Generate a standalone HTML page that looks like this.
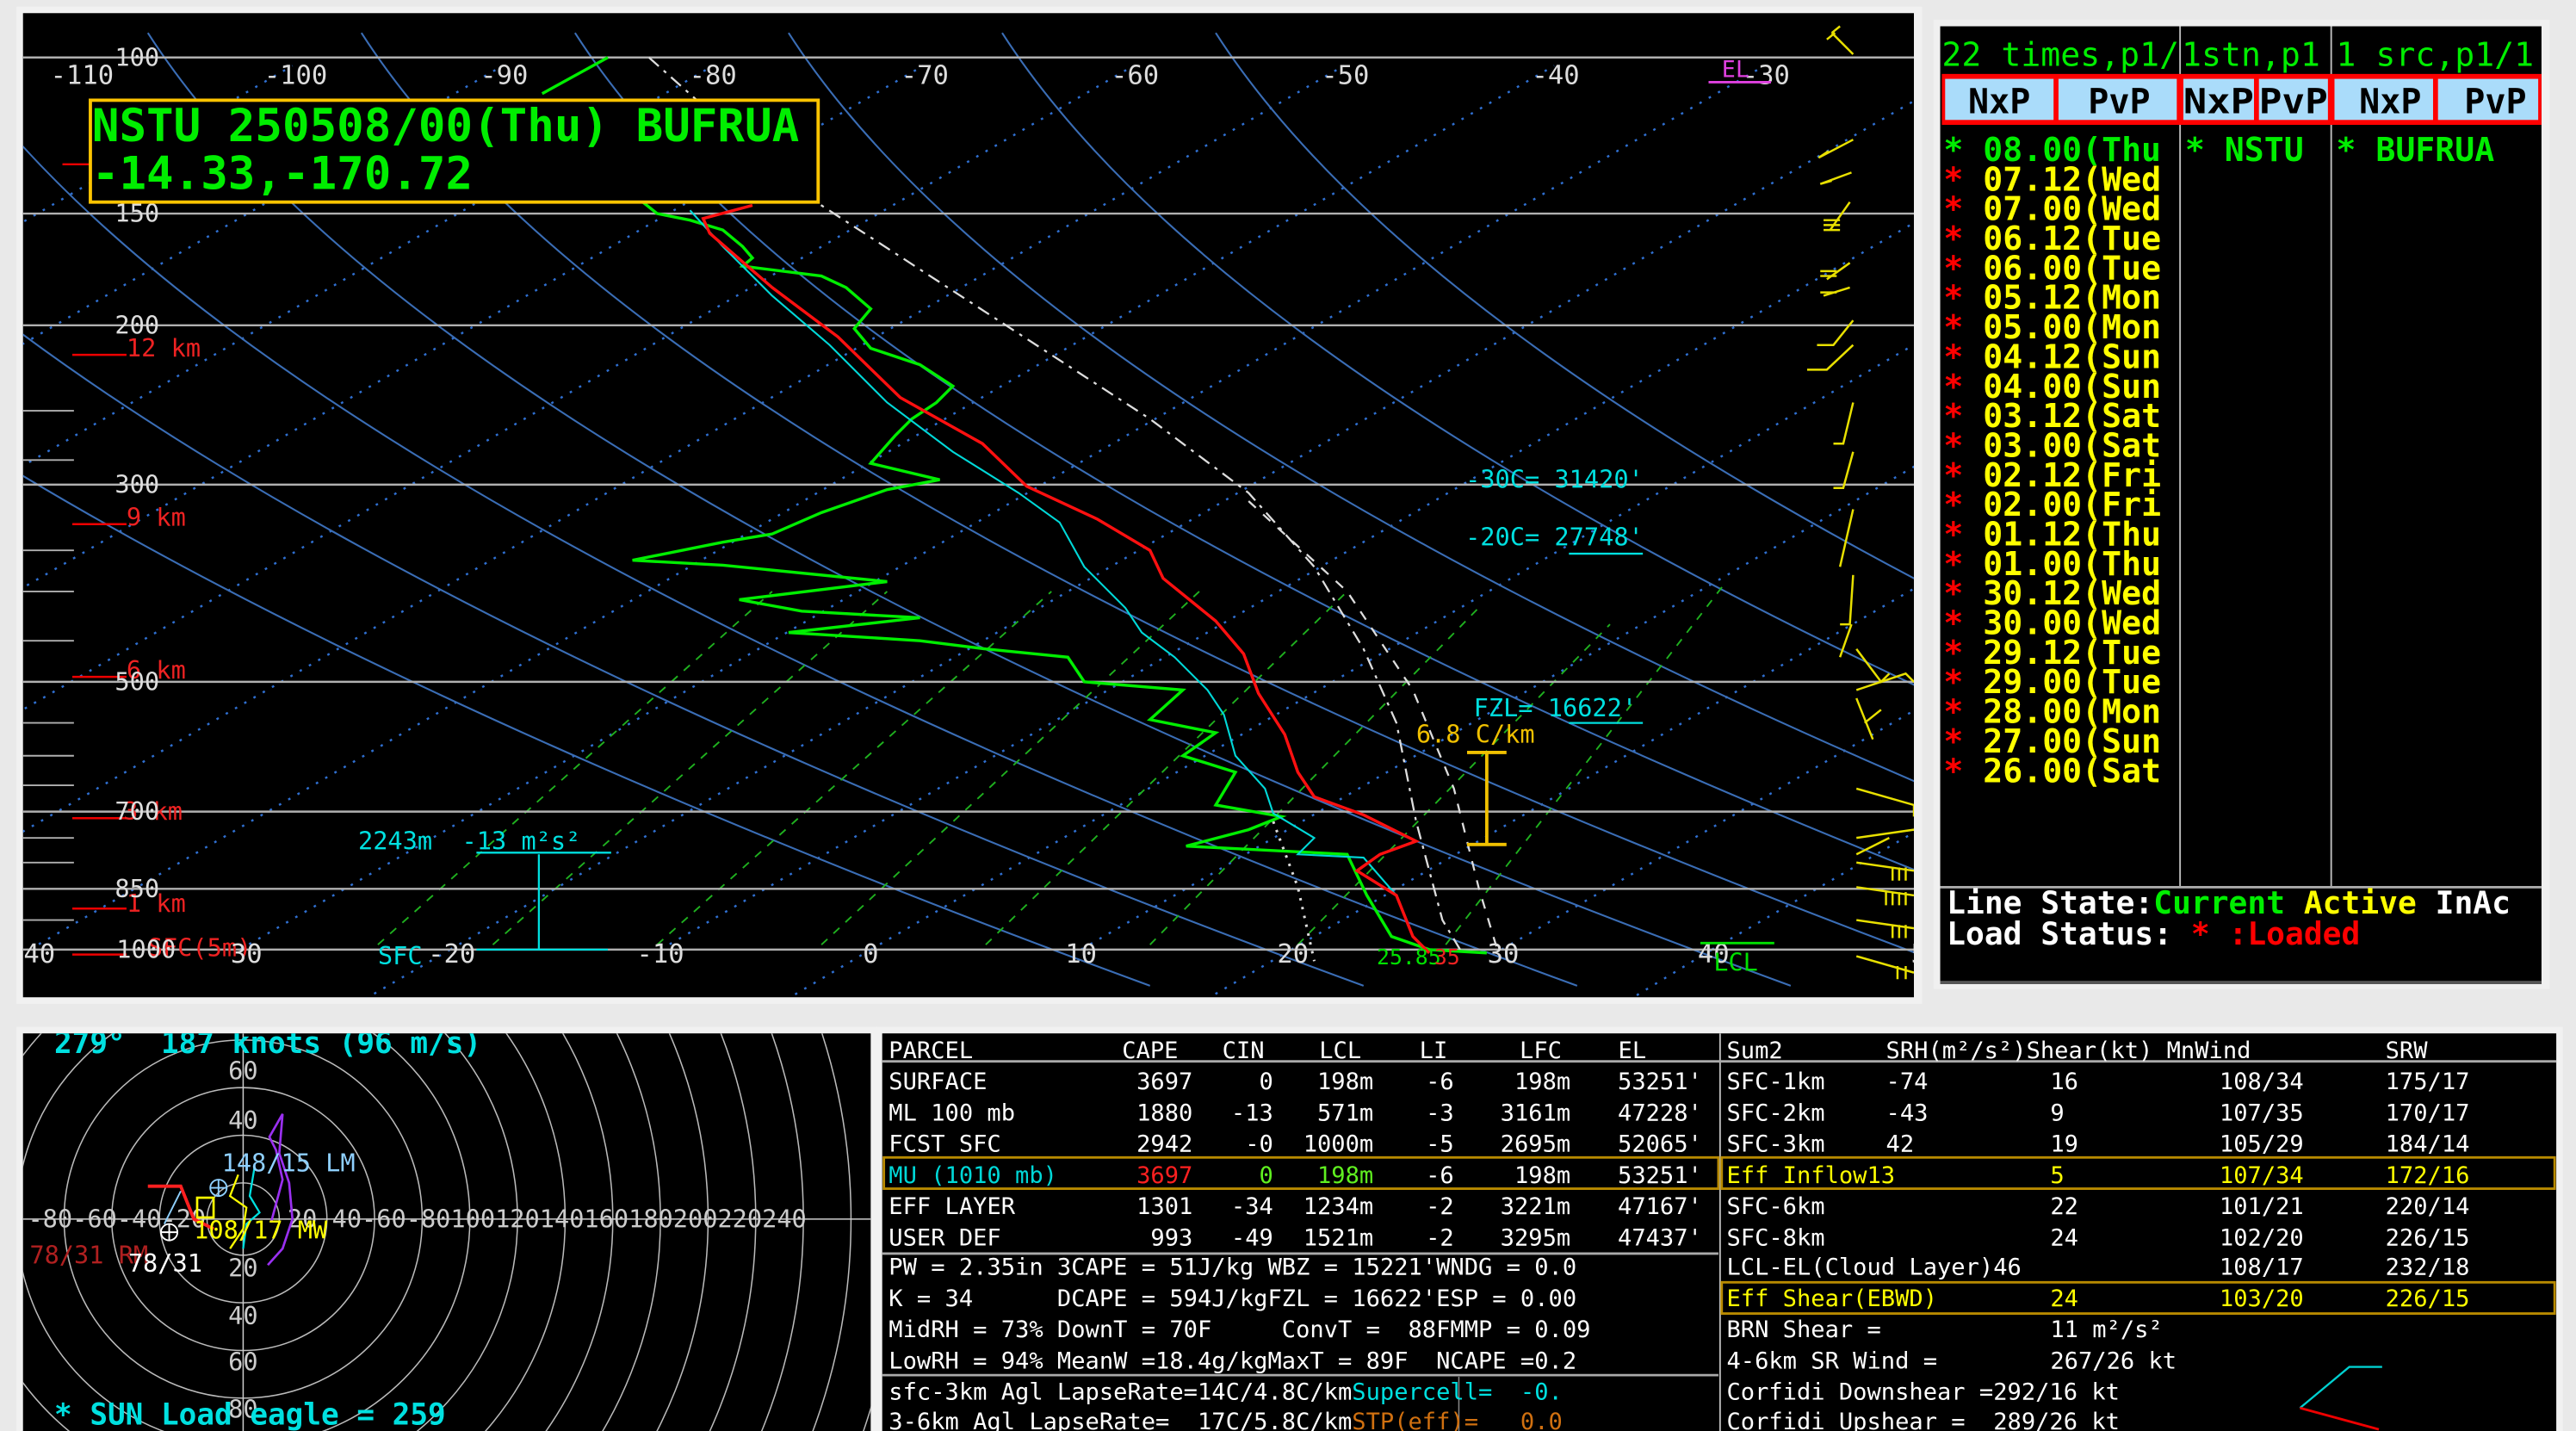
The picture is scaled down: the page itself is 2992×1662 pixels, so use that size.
<!DOCTYPE html>
<html><head><meta charset="utf-8"><style>
html,body{margin:0;padding:0;background:#e9e9e9;width:2992px;height:1662px;overflow:hidden}
svg{display:block}
text{font-family:"DejaVu Sans Mono","Liberation Mono",monospace;white-space:pre}
.t{font-size:14.2px;fill:#fff}
</style></head><body>
<svg width="2992" height="1662" viewBox="0 0 1568 871" xmlns="http://www.w3.org/2000/svg">
<defs>
<clipPath id="cs"><rect x="14" y="8" width="1151" height="599"/></clipPath>
<clipPath id="ch"><rect x="14" y="629" width="516" height="242"/></clipPath>
<clipPath id="ct"><rect x="537" y="629" width="1019" height="242"/></clipPath>
<clipPath id="cl"><rect x="537" y="629" width="509" height="242"/></clipPath>
</defs>
<rect width="1568" height="871" fill="#e9e9e9"/>
<rect x="10" y="4" width="1160" height="607" fill="#f1f1f1"/>
<rect x="14" y="8" width="1151" height="599" fill="#000"/>
<g clip-path="url(#cs)">
 <g stroke="#2f6fd0" stroke-width="1.3" stroke-dasharray="1.5,5" fill="none">
  <path d="M-238 578 L690 40"/><path d="M-110 578 L818 40"/><path d="M18 578 L946 40"/><path d="M146 578 L1074 40"/><path d="M274 578 L1202 40"/><path d="M402 578 L1330 40"/><path d="M530 578 L1458 40"/><path d="M658 578 L1586 40"/><path d="M786 578 L1714 40"/><path d="M914 578 L1842 40"/><path d="M1042 578 L1970 40"/><path d="M-366 578 L562 40"/><path d="M-494 578 L434 40"/><path d="M-622 578 L306 40"/><path d="M-750 578 L178 40"/>
  <path d="M-238 578 L-400 672"/><path d="M274 578 L150 650"/><path d="M530 578 L400 655"/><path d="M786 578 L680 640"/><path d="M1042 578 L940 640"/>
 </g>
 <g stroke="#3a6db5" stroke-width="1.1" fill="none">
  <path d="M-300 20 Q-120 300 700 600"/><path d="M-170 20 Q10 300 830 600"/><path d="M-40 20 Q140 300 960 600"/><path d="M90 20 Q270 300 1090 600"/><path d="M220 20 Q400 300 1220 600"/><path d="M350 20 Q530 300 1350 600"/><path d="M480 20 Q660 300 1480 600"/><path d="M610 20 Q790 300 1610 600"/><path d="M740 20 Q920 300 1740 600"/>
 </g>
 <g stroke="#1fb01f" stroke-width="1" stroke-dasharray="5,5" fill="none">
  <path d="M230 575 L470 360"/><path d="M300 575 L540 360"/><path d="M400 575 L640 360"/><path d="M500 575 L730 360"/><path d="M600 575 L820 360"/><path d="M700 575 L900 370"/><path d="M790 575 L980 380"/><path d="M880 575 L1050 355"/>
 </g>
 <g stroke="#b0b0b0" stroke-width="1.3">
  <path d="M14 35H1165M14 130H1165M14 198H1165M14 295H1165M14 415H1165M14 494H1165M14 541H1165M14 578H1165"/>
  <path d="M14 250H45M14 280H45M14 335H45M14 360H45M14 390H45M14 440H45M14 460H45M14 478H45M14 510H45M14 525H45M14 560H45" stroke-width="1"/>
 </g>
 <g stroke="#e00" stroke-width="1.3"><path d="M44 216H77M44 319H77M44 412H77M44 498H77M44 553H77M44 581H77M38 100H55"/></g>
 <g font-size="15" fill="#e22"><text x="77" y="217">12 km</text><text x="77" y="320">9 km</text><text x="77" y="413">6 km</text><text x="75" y="499">3 km</text><text x="77" y="555">1 km</text><text x="90" y="582">SFC(5m)</text></g>
 <g font-size="15" fill="#ddd" text-anchor="end"><text x="97" y="40">100</text><text x="97" y="135">150</text><text x="97" y="203">200</text><text x="97" y="300">300</text><text x="97" y="420">500</text><text x="97" y="499">700</text><text x="97" y="546">850</text><text x="107" y="583">1000</text></g>
 <g font-size="16" fill="#ddd" text-anchor="middle"><text x="50" y="51">-110</text><text x="180" y="51">-100</text><text x="307" y="51">-90</text><text x="434" y="51">-80</text><text x="563" y="51">-70</text><text x="691" y="51">-60</text><text x="819" y="51">-50</text><text x="947" y="51">-40</text><text x="1075" y="51">-30</text>
 <text x="24" y="586">40</text><text x="150" y="586">30</text><text x="275" y="586">-20</text><text x="402" y="586">-10</text><text x="530" y="586">0</text><text x="658" y="586">10</text><text x="787" y="586">20</text><text x="915" y="586">30</text><text x="1043" y="586">40</text><text x="1168" y="586">5</text></g>
 <polyline fill="none" stroke="#ddd" stroke-width="1.2" stroke-dasharray="8,4,2,4" points="395,35 440,75 500,125 600,190 700,255 760,300 800,345 830,395 850,440 862,500 878,560 890,580"/>
 <polyline fill="none" stroke="#ddd" stroke-width="1.2" stroke-dasharray="6,6" points="760,305 820,360 860,420 885,480 900,540 912,580"/>
 <polyline fill="none" stroke="#ddd" stroke-width="1.6" stroke-dasharray="1.5,4" points="775,500 790,540 800,585"/>
 <polyline fill="none" stroke="#00ee00" stroke-width="1.8" points="330,57 370,35"/>
 <polyline fill="none" stroke="#00ee00" stroke-width="1.8" points="390,122 400,130 420,134 440,140 452,150 458,157 452,162 500,168 515,175 530,188 520,200 530,212 560,222 580,235 570,245 555,255 545,265 530,282 572,292 540,298 500,312 470,325 440,330 385,341 440,344 540,354 450,365 488,372 560,376 480,385 560,390 600,395 650,400 660,415 720,420 700,438 740,446 720,460 752,470 740,490 780,497 760,505 722,515 820,520 832,545 847,570 870,578 905,580"/>
 <polyline fill="none" stroke="#00d8d8" stroke-width="1.1" points="420,128 440,150 470,180 505,210 540,245 580,275 620,300 645,318 660,345 685,370 695,385 715,400 735,420 745,435 752,460 770,480 775,495 800,510 790,520 830,522 850,545 860,570 870,580"/>
 <polyline fill="none" stroke="#ff1010" stroke-width="1.8" points="458,125 428,133 432,142 470,175 510,205 548,242 598,270 625,296 668,316 700,335 708,352 740,378 757,398 766,422 782,447 790,470 800,485 830,496 862,512 840,520 826,530 850,545 860,570 870,580"/>
 <g font-size="15" fill="#00e0e0"><text x="892" y="297">-30C= 31420'</text><text x="892" y="332">-20C= 27748'</text><text x="897" y="436">FZL= 16622'</text><text x="218" y="517">2243m  -13 m²s²</text><text x="230" y="587">SFC</text></g>
 <g stroke="#00e0e0" stroke-width="1.2"><path d="M955 337H1000M955 440H1000M290 519H372M328 520V578M290 578H370"/></g>
 <text x="862" y="452" font-size="15" fill="#f0c000">6.8 C/km</text>
 <g stroke="#f0c000" stroke-width="2"><path d="M905 458V514M893 458H917M893 514H917"/></g>
 <text x="1048" y="47" font-size="14" fill="#e040e0">EL</text><path d="M1040 50H1078" stroke="#e040e0" stroke-width="1.5"/>
 <text x="1043" y="591" font-size="15" fill="#00e000">LCL</text><path d="M1035 574H1080" stroke="#00e000" stroke-width="1.5"/>
 <text x="838" y="587" font-size="13" fill="#00e000">25.85</text><text x="873" y="587" font-size="13" fill="#e22">35</text>
 <g stroke="#e8e000" stroke-width="1.3" fill="none">
  <path d="M1128 33L1115 20M1115 20L1120 16M1112 24L1117 20"/>
  <path d="M1128 85L1107 96L1113 92"/><path d="M1127 105L1108 112L1115 110"/>
  <path d="M1126 123L1114 140M1110 140H1120M1110 137H1120M1110 134H1120"/>
  <path d="M1126 160L1112 170M1108 168H1118M1108 165H1118"/><path d="M1126 175L1110 180M1108 178H1118"/>
  <path d="M1128 195L1116 210H1106M1128 210L1112 225H1100"/>
  <path d="M1128 245L1122 270H1116M1128 275L1122 297H1116"/>
  <path d="M1128 310L1120 345M1128 350L1126 380H1120"/>
  <path d="M1127 380L1120 400M1130 395L1145 415L1150 410"/>
  <path d="M1130 420L1160 410L1165 415M1130 425L1140 450M1135 440L1145 432"/>
  <path d="M1130 480L1165 490L1165 497M1130 510L1165 505L1170 510M1130 520L1150 510"/>
  <path d="M1130 525L1165 530M1160 528V536M1156 528V536M1152 528V536"/><path d="M1130 540L1165 545M1160 543V551M1156 543V551M1152 543V551M1148 543V551"/>
  <path d="M1130 560L1165 565M1160 563V571M1156 563V571M1152 563V571"/><path d="M1130 582L1165 592M1160 588V596M1155 588V596"/>
 </g>
 <rect x="55" y="61" width="443" height="62" fill="#000" stroke="#ffc400" stroke-width="2"/>
 <text x="56" y="86" font-size="27.5" font-weight="bold" fill="#00ee00">NSTU 250508/00(Thu) BUFRUA</text>
 <text x="56" y="115" font-size="27.5" font-weight="bold" fill="#00ee00">-14.33,-170.72</text>
</g>

<rect x="1177" y="12" width="375" height="590" fill="#f0f0f0"/>
<rect x="1181" y="16" width="366" height="583" fill="#000"/>
<path d="M1327 16V540M1419 16V540" stroke="#bbb" stroke-width="1"/>
<g font-size="20" fill="#00ee00"><text x="1182" y="40">22 times,p1/</text><text x="1328" y="40">1stn,p1</text><text x="1422" y="40">1 src,p1/1</text></g>
<rect x="1182" y="45" width="365" height="31" fill="#ff0000"/>
<g fill="#aadcfa"><rect x="1184" y="48" width="66" height="25"/><rect x="1253" y="48" width="72" height="25"/><rect x="1329" y="48" width="43" height="25"/><rect x="1375" y="48" width="42" height="25"/><rect x="1421" y="48" width="60" height="25"/><rect x="1484" y="48" width="61" height="25"/></g>
<g font-size="21" font-weight="bold" fill="#000"><text x="1198" y="69">NxP</text><text x="1271" y="69">PvP</text><text x="1329" y="69" textLength="43" lengthAdjust="spacingAndGlyphs">NxP</text><text x="1375" y="69" textLength="42" lengthAdjust="spacingAndGlyphs">PvP</text><text x="1436" y="69">NxP</text><text x="1500" y="69">PvP</text></g>
<g font-size="20" font-weight="bold">
<text x="1183" y="98" fill="#00ee00">* 08.00(Thu</text><text x="1330" y="98" fill="#00ee00">* NSTU</text><text x="1422" y="98" fill="#00ee00">* BUFRUA</text>
<g fill="#ffff00">
<text x="1183" y="116"><tspan fill="#f00">*</tspan> 07.12(Wed</text>
<text x="1183" y="134"><tspan fill="#f00">*</tspan> 07.00(Wed</text>
<text x="1183" y="152"><tspan fill="#f00">*</tspan> 06.12(Tue</text>
<text x="1183" y="170"><tspan fill="#f00">*</tspan> 06.00(Tue</text>
<text x="1183" y="188"><tspan fill="#f00">*</tspan> 05.12(Mon</text>
<text x="1183" y="206"><tspan fill="#f00">*</tspan> 05.00(Mon</text>
<text x="1183" y="224"><tspan fill="#f00">*</tspan> 04.12(Sun</text>
<text x="1183" y="242"><tspan fill="#f00">*</tspan> 04.00(Sun</text>
<text x="1183" y="260"><tspan fill="#f00">*</tspan> 03.12(Sat</text>
<text x="1183" y="278"><tspan fill="#f00">*</tspan> 03.00(Sat</text>
<text x="1183" y="296"><tspan fill="#f00">*</tspan> 02.12(Fri</text>
<text x="1183" y="314"><tspan fill="#f00">*</tspan> 02.00(Fri</text>
<text x="1183" y="332"><tspan fill="#f00">*</tspan> 01.12(Thu</text>
<text x="1183" y="350"><tspan fill="#f00">*</tspan> 01.00(Thu</text>
<text x="1183" y="368"><tspan fill="#f00">*</tspan> 30.12(Wed</text>
<text x="1183" y="386"><tspan fill="#f00">*</tspan> 30.00(Wed</text>
<text x="1183" y="404"><tspan fill="#f00">*</tspan> 29.12(Tue</text>
<text x="1183" y="422"><tspan fill="#f00">*</tspan> 29.00(Tue</text>
<text x="1183" y="440"><tspan fill="#f00">*</tspan> 28.00(Mon</text>
<text x="1183" y="458"><tspan fill="#f00">*</tspan> 27.00(Sun</text>
<text x="1183" y="476"><tspan fill="#f00">*</tspan> 26.00(Sat</text>
</g></g>
<path d="M1181 540H1547" stroke="#aaa" stroke-width="1.5"/>
<g font-size="19" font-weight="bold"><text x="1185" y="556" fill="#fff">Line State:<tspan fill="#00ee00">Current</tspan> <tspan fill="#ffff00">Active</tspan> InAc</text>
<text x="1185" y="575" fill="#fff">Load Status: <tspan fill="#f00">* :Loaded</tspan></text></g>
<path d="M1181 598H1547" stroke="#555" stroke-width="2"/>

<rect x="10" y="625" width="524" height="246" fill="#f1f1f1"/>
<rect x="14" y="629" width="516" height="242" fill="#000"/>
<g clip-path="url(#ch)">
 <g fill="none" stroke="#bbb" stroke-width="0.8">
  <circle cx="148" cy="742" r="22"/><circle cx="148" cy="742" r="51"/><circle cx="148" cy="742" r="80"/><circle cx="148" cy="742" r="109"/><circle cx="148" cy="742" r="138"/><circle cx="148" cy="742" r="167"/><circle cx="148" cy="742" r="196"/><circle cx="148" cy="742" r="225"/><circle cx="148" cy="742" r="254"/><circle cx="148" cy="742" r="283"/><circle cx="148" cy="742" r="312"/><circle cx="148" cy="742" r="341"/><circle cx="148" cy="742" r="370"/><circle cx="148" cy="742" r="399"/>
  <path d="M14 742H530M148 629V871" stroke="#ccc"/>
 </g>
 <g font-size="15" fill="#ccc"><text x="17" y="747">-80-60-40-20</text><text x="175" y="747">20 40-60-80100120140160180200220240</text>
 <g text-anchor="middle"><text x="148" y="657">60</text><text x="148" y="687">40</text><text x="148" y="777">20</text><text x="148" y="806">40</text><text x="148" y="834">60</text><text x="148" y="863">80</text></g></g>
 <polyline fill="none" stroke="#9a30f0" stroke-width="1.4" points="165,744 172,718 168,700 164,692 172,678 170,702 176,720 178,742 172,760 163,770"/>
 <polyline fill="none" stroke="#00e0e0" stroke-width="1.2" points="155,710 152,728 158,738 150,745 148,760"/>
 <polyline fill="none" stroke="#ffff00" stroke-width="1.2" points="145,715 140,728 150,735 148,748 140,760"/>
 <rect x="120" y="729" width="10" height="12" fill="none" stroke="#ffff00" stroke-width="1.4"/>
 <path d="M90 722H110L118 742L130 748" fill="none" stroke="#ff2020" stroke-width="2"/>
 <path d="M110 725L100 745" stroke="#8fd0ff" stroke-width="1"/>
 <circle cx="103" cy="750" r="5" fill="none" stroke="#fff" stroke-width="1"/><path d="M98 750H108M103 745V755" stroke="#fff" stroke-width="1"/>
 <circle cx="133" cy="723" r="5" fill="none" stroke="#8fd0ff" stroke-width="1"/><path d="M128 723H138M133 718V728" stroke="#8fd0ff"/>
 <text x="135" y="713" font-size="15" fill="#8fd0ff">148/15 LM</text>
 <text x="118" y="754" font-size="15" fill="#ffff00">108/17 MW</text>
 <text x="18" y="769" font-size="15" fill="#b02020">78/31 RM</text>
 <text x="78" y="774" font-size="15" fill="#fff">78/31</text>
 <text x="33" y="641" font-size="18" font-weight="bold" fill="#00e0e0">279°  187 knots (96 m/s)</text>
 <text x="33" y="867" font-size="18" font-weight="bold" fill="#00e0e0">* SUN Load eagle = 259</text>
</g>

<rect x="533" y="625" width="1027" height="246" fill="#f1f1f1"/>
<rect x="537" y="629" width="1019" height="242" fill="#000"/>
<g clip-path="url(#ct)">
 <path d="M1047 629V871" stroke="#bbb" stroke-width="1"/>
 <path d="M537 646H1556" stroke="#aaa" stroke-width="1.5"/>
 <path d="M537 763H1046M537 837H1046" stroke="#aaa" stroke-width="1.5"/>
 <path d="M888 838V871" stroke="#888" stroke-width="0.8"/>
 <g fill="none" stroke="#b88a00" stroke-width="1.5"><rect x="538" y="704.5" width="508" height="19"/><rect x="1048" y="704.5" width="507" height="19"/><rect x="1048" y="780.5" width="507" height="19"/></g>
 <g class="t">
  <text x="541" y="644">PARCEL</text><text x="683" y="644">CAPE</text><text x="744" y="644">CIN</text><text x="803" y="644">LCL</text><text x="864" y="644">LI</text><text x="925" y="644">LFC</text><text x="985" y="644">EL</text>
  <g clip-path="url(#cl)"><text x="541" y="663">SURFACE</text><text x="541" y="682">ML 100 mb</text><text x="541" y="701">FCST SFC</text><text x="541" y="739">EFF LAYER</text><text x="541" y="758">USER DEF</text>
  <text x="541" y="776">PW = 2.35in 3CAPE = 51J/kg WBZ = 15221'WNDG = 0.0</text>
  <text x="541" y="795">K = 34      DCAPE = 594J/kgFZL = 16622'ESP = 0.00</text>
  <text x="541" y="814">MidRH = 73% DownT = 70F     ConvT =  88FMMP = 0.09</text>
  <text x="541" y="833">LowRH = 94% MeanW =18.4g/kgMaxT = 89F  NCAPE =0.2</text>
  <text x="541" y="852">sfc-3km Agl LapseRate=14C/4.8C/km<tspan fill="#00e0e0">Supercell=  -0.</tspan></text>
  <text x="541" y="870">3-6km Agl LapseRate=  17C/5.8C/km<tspan fill="#d07010">STP(eff)=   0.0</tspan></text></g>
  <text x="541" y="720" fill="#00d8d8">MU (1010 mb)</text>
  <g text-anchor="end">
   <text x="726" y="663">3697</text><text x="775" y="663">0</text><text x="836" y="663">198m</text><text x="885" y="663">-6</text><text x="956" y="663">198m</text><text x="1036" y="663">53251'</text>
   <text x="726" y="682">1880</text><text x="775" y="682">-13</text><text x="836" y="682">571m</text><text x="885" y="682">-3</text><text x="956" y="682">3161m</text><text x="1036" y="682">47228'</text>
   <text x="726" y="701">2942</text><text x="775" y="701">-0</text><text x="836" y="701">1000m</text><text x="885" y="701">-5</text><text x="956" y="701">2695m</text><text x="1036" y="701">52065'</text>
   <text x="726" y="720" fill="#ff2020">3697</text><text x="775" y="720" fill="#60f020">0</text><text x="836" y="720" fill="#60f020">198m</text><text x="885" y="720">-6</text><text x="956" y="720">198m</text><text x="1036" y="720">53251'</text>
   <text x="726" y="739">1301</text><text x="775" y="739">-34</text><text x="836" y="739">1234m</text><text x="885" y="739">-2</text><text x="956" y="739">3221m</text><text x="1036" y="739">47167'</text>
   <text x="726" y="758">993</text><text x="775" y="758">-49</text><text x="836" y="758">1521m</text><text x="885" y="758">-2</text><text x="956" y="758">3295m</text><text x="1036" y="758">47437'</text>
  </g>
  <text x="1051" y="644">Sum2</text><text x="1148" y="644">SRH(m²/s²)Shear(kt) MnWind</text><text x="1452" y="644">SRW</text>
  <text x="1051" y="663">SFC-1km</text><text x="1148" y="663">-74</text><text x="1248" y="663">16</text><text x="1351" y="663">108/34</text><text x="1452" y="663">175/17</text>
  <text x="1051" y="682">SFC-2km</text><text x="1148" y="682">-43</text><text x="1248" y="682">9</text><text x="1351" y="682">107/35</text><text x="1452" y="682">170/17</text>
  <text x="1051" y="701">SFC-3km</text><text x="1148" y="701">42</text><text x="1248" y="701">19</text><text x="1351" y="701">105/29</text><text x="1452" y="701">184/14</text>
  <g fill="#ffff00"><text x="1051" y="720">Eff Inflow13</text><text x="1248" y="720">5</text><text x="1351" y="720">107/34</text><text x="1452" y="720">172/16</text></g>
  <text x="1051" y="739">SFC-6km</text><text x="1248" y="739">22</text><text x="1351" y="739">101/21</text><text x="1452" y="739">220/14</text>
  <text x="1051" y="758">SFC-8km</text><text x="1248" y="758">24</text><text x="1351" y="758">102/20</text><text x="1452" y="758">226/15</text>
  <text x="1051" y="776">LCL-EL(Cloud Layer)46</text><text x="1351" y="776">108/17</text><text x="1452" y="776">232/18</text>
  <g fill="#ffff00"><text x="1051" y="795">Eff Shear(EBWD)</text><text x="1248" y="795">24</text><text x="1351" y="795">103/20</text><text x="1452" y="795">226/15</text></g>
  <text x="1051" y="814">BRN Shear =</text><text x="1248" y="814">11 m²/s²</text>
  <text x="1051" y="833">4-6km SR Wind =</text><text x="1248" y="833">267/26 kt</text>
  <text x="1051" y="852">Corfidi Downshear =292/16 kt</text>
  <text x="1051" y="870">Corfidi Upshear =  289/26 kt</text>
 </g>
 <path d="M1400 857L1430 832H1450" fill="none" stroke="#00d0d0" stroke-width="1.2"/>
 <path d="M1400 857L1448 870" fill="none" stroke="#e00" stroke-width="1.5"/>
</g>
</svg>
</body></html>
